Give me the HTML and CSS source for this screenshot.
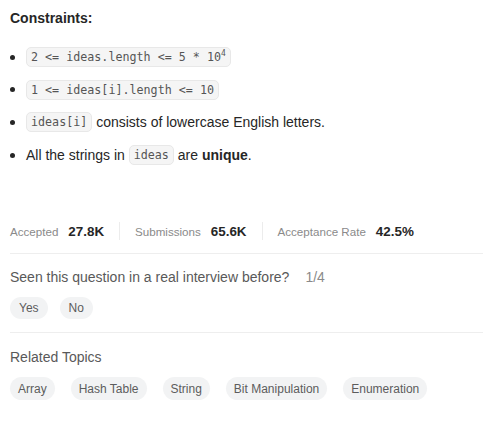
FILE: index.html
```html
<!DOCTYPE html>
<html>
<head>
<meta charset="utf-8">
<link rel="stylesheet" href="styles.css">
</head>
<body>
<div class="page">
  <h3 class="title">Constraints:</h3>
  <ul class="list">
    <li><code>2 &lt;= ideas.length &lt;= 5 * 10<sup>4</sup></code></li>
    <li><code>1 &lt;= ideas[i].length &lt;= 10</code></li>
    <li><code>ideas[i]</code> consists of lowercase English letters.</li>
    <li>All the strings in <code>ideas</code> are <strong>unique</strong>.</li>
  </ul>

  <div class="stats">
    <div class="stat"><span class="label">Accepted</span><span class="value">27.8K</span></div>
    <div class="sep"></div>
    <div class="stat"><span class="label">Submissions</span><span class="value">65.6K</span></div>
    <div class="sep"></div>
    <div class="stat"><span class="label">Acceptance Rate</span><span class="value">42.5%</span></div>
  </div>

  <div class="divider"></div>

  <div class="question">Seen this question in a real interview before?<span class="count">1/4</span></div>
  <div class="pills small-gap">
    <span class="pill short">Yes</span>
    <span class="pill short">No</span>
  </div>

  <div class="divider second"></div>

  <div class="question">Related Topics</div>
  <div class="pills">
    <span class="pill">Array</span>
    <span class="pill">Hash Table</span>
    <span class="pill">String</span>
    <span class="pill">Bit Manipulation</span>
    <span class="pill">Enumeration</span>
  </div>
</div>
</body>
</html>
```

FILE: styles.css
```css
html, body {
  margin: 0;
  padding: 0;
  background: #ffffff;
}

.page {
  padding: 8px 0 0 10px;
  font-family: "Liberation Sans", Arial, sans-serif;
  font-size: 14px;
  color: #262626;
}

.title {
  margin: 0;
  font-size: 14px;
  line-height: 20px;
  font-weight: 700;
  color: #262626;
}

.list {
  list-style: none;
  margin: 19px 0 0 0;
  padding: 0;
}

.list li {
  display: flex;
  align-items: center;
  height: 20px;
  line-height: 20px;
  margin-bottom: 12.7px;
  white-space: pre;
}

.list li::before {
  content: "";
  width: 5px;
  height: 5px;
  border-radius: 50%;
  background: #262626;
  margin: 0 11px 0 0;
  flex: none;
}

code {
  font-family: "DejaVu Sans Mono", monospace;
  font-size: 11.7px;
  line-height: 18px;
  color: #555555;
  background: #f5f5f5;
  border: 1px solid #e8e8e8;
  border-radius: 5px;
  padding: 0 4px;
}

sup {
  font-size: 8px;
  line-height: 0;
  vertical-align: 5px;
}

strong {
  font-weight: 700;
}

.stats {
  display: flex;
  align-items: center;
  margin-top: 56px;
  height: 20px;
}

.stat {
  display: flex;
  align-items: baseline;
  gap: 10px;
}

.label {
  font-size: 11.6px;
  color: #8a8a8a;
}

.value {
  font-size: 13.4px;
  font-weight: 700;
  color: #262626;
}

.sep {
  width: 1px;
  height: 18px;
  background: #ececec;
  margin: 0 15px;
}

.divider {
  height: 1px;
  background: #eeeeee;
  margin-top: 12px;
}

.divider.second {
  margin-top: 13px;
}

.question {
  margin-top: 13px;
  line-height: 20px;
  font-size: 14px;
  color: #595959;
}

.divider.second + .question {
  margin-top: 14px;
}

.count {
  margin-left: 16px;
  color: #8a8a8a;
}

.pills {
  display: flex;
  gap: 16px;
  margin-top: 10px;
}

.pills.small-gap {
  gap: 12px;
}

.pill {
  display: inline-flex;
  align-items: center;
  height: 23px;
  padding: 0 8px;
  border-radius: 12px;
  background: #f2f3f4;
  color: #5c5c5c;
  font-size: 12px;
}

.pill.short {
  height: 22px;
  padding: 0 9px;
}
```
